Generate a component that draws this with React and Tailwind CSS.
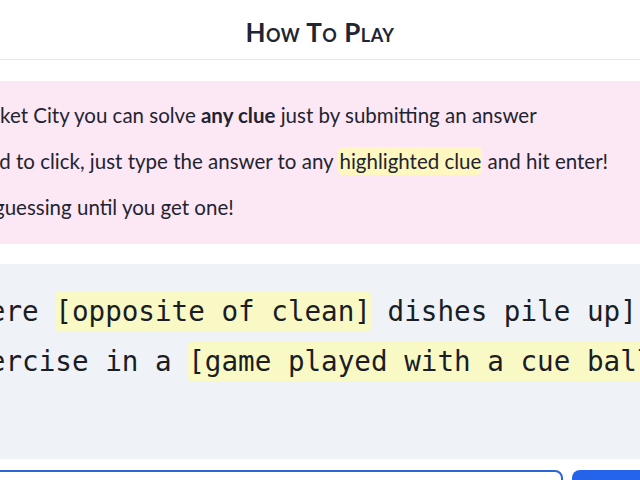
export default function App() {
  const sans = { fontFamily: "Lato, 'Noto Sans', sans-serif" };
  const mono = { fontFamily: "'DejaVu Sans Mono', 'Liberation Mono', monospace" };
  return (
    <div className="w-[640px] h-[480px] overflow-hidden bg-white text-[#1f2430] flex flex-col" style={sans}>
      <header className="h-[60px] shrink-0 border-b border-[#e5e7eb] flex items-center justify-center">
        <h2 className="text-[26px] font-bold tracking-[0.5px] [font-variant:small-caps] text-[#1e2533] leading-none pt-[4px]">
          How To Play
        </h2>
      </header>

      <div className="shrink-0 mt-[21px] mx-[-40px] bg-[#fce7f5] h-[163px] pt-[20px]">
        <ul className="flex flex-col gap-[18px] text-[20.5px] leading-[28px] ml-[-26px] whitespace-nowrap">
          <li>On Pocket City you can solve <b className="font-bold">any clue</b> just by submitting an answer</li>
          <li>
            No need to click, just type the answer to any{" "}
            <span className="bg-[#fef7c0] rounded-[5px] px-[1px] py-[2px]">highlighted clue</span> and hit enter!
          </li>
          <li>Go on guessing until you get one!</li>
        </ul>
      </div>

      <div className="shrink-0 mt-[20px] mx-[-40px] bg-[#eff2f7] h-[195px] pt-[23px]">
        <div className="ml-[-21px] text-[27.6px] leading-[50px] whitespace-nowrap text-[#1a1d24]" style={mono}>
          <div>
            [Where <span className="bg-[#f9f9c6] rounded-[3px] py-[3px]">[opposite of clean]</span> dishes pile up]
          </div>
          <div>
            [Exercise in a <span className="bg-[#f9f9c6] rounded-[3px] py-[3px]">[game played with a cue ball]</span>]
          </div>
        </div>
      </div>

      <div className="shrink-0 mt-[11px] flex gap-[9px] ml-[-30px]">
        <div className="shrink-0 w-[593px] h-[40px] rounded-[8px] border-2 border-[#2a66d8] bg-white" />
        <div className="shrink-0 w-[120px] h-[40px] rounded-[8px] bg-[#2563eb]" />
      </div>
    </div>
  );
}
